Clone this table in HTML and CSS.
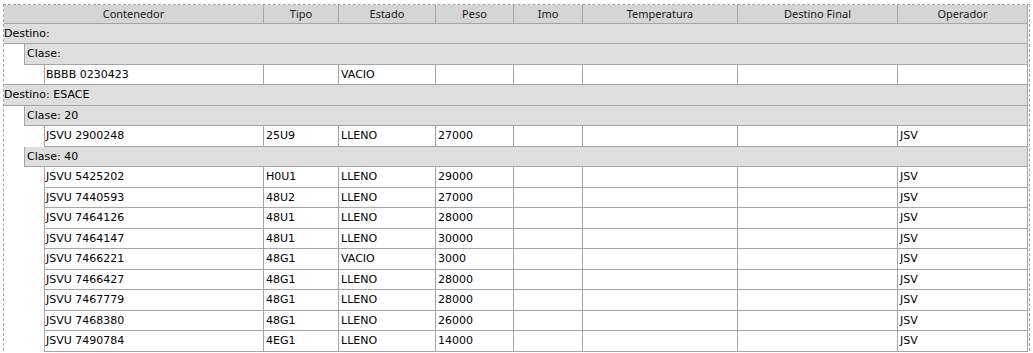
FILE: index.html
```html
<!DOCTYPE html>
<html lang="es">
<head>
<meta charset="utf-8">
<title>Contenedores</title>
<link rel="stylesheet" href="styles.css">
</head>
<body>
<div class="frame">
  <div class="grid">
    <div class="row head">
      <div class="c c1">Contenedor</div>
      <div class="c c2">Tipo</div>
      <div class="c c3">Estado</div>
      <div class="c c4">Peso</div>
      <div class="c c5">Imo</div>
      <div class="c c6">Temperatura</div>
      <div class="c c7">Destino Final</div>
      <div class="c c8">Operador</div>
    </div>

    <div class="row group g0"><div class="gcell">Destino:</div></div>
    <div class="row group g1"><div class="gcell">Clase:</div></div>
    <div class="row data">
      <div class="c c1">BBBB 0230423</div><div class="c c2"></div><div class="c c3">VACIO</div><div class="c c4"></div><div class="c c5"></div><div class="c c6"></div><div class="c c7"></div><div class="c c8"></div>
    </div>

    <div class="row group g0"><div class="gcell">Destino: ESACE</div></div>
    <div class="row group g1"><div class="gcell">Clase: 20</div></div>
    <div class="row data">
      <div class="c c1">JSVU 2900248</div><div class="c c2">25U9</div><div class="c c3">LLENO</div><div class="c c4">27000</div><div class="c c5"></div><div class="c c6"></div><div class="c c7"></div><div class="c c8">JSV</div>
    </div>
    <div class="row group g1"><div class="gcell">Clase: 40</div></div>
    <div class="row data">
      <div class="c c1">JSVU 5425202</div><div class="c c2">H0U1</div><div class="c c3">LLENO</div><div class="c c4">29000</div><div class="c c5"></div><div class="c c6"></div><div class="c c7"></div><div class="c c8">JSV</div>
    </div>
    <div class="row data">
      <div class="c c1">JSVU 7440593</div><div class="c c2">48U2</div><div class="c c3">LLENO</div><div class="c c4">27000</div><div class="c c5"></div><div class="c c6"></div><div class="c c7"></div><div class="c c8">JSV</div>
    </div>
    <div class="row data">
      <div class="c c1">JSVU 7464126</div><div class="c c2">48U1</div><div class="c c3">LLENO</div><div class="c c4">28000</div><div class="c c5"></div><div class="c c6"></div><div class="c c7"></div><div class="c c8">JSV</div>
    </div>
    <div class="row data">
      <div class="c c1">JSVU 7464147</div><div class="c c2">48U1</div><div class="c c3">LLENO</div><div class="c c4">30000</div><div class="c c5"></div><div class="c c6"></div><div class="c c7"></div><div class="c c8">JSV</div>
    </div>
    <div class="row data">
      <div class="c c1">JSVU 7466221</div><div class="c c2">48G1</div><div class="c c3">VACIO</div><div class="c c4">3000</div><div class="c c5"></div><div class="c c6"></div><div class="c c7"></div><div class="c c8">JSV</div>
    </div>
    <div class="row data">
      <div class="c c1">JSVU 7466427</div><div class="c c2">48G1</div><div class="c c3">LLENO</div><div class="c c4">28000</div><div class="c c5"></div><div class="c c6"></div><div class="c c7"></div><div class="c c8">JSV</div>
    </div>
    <div class="row data">
      <div class="c c1">JSVU 7467779</div><div class="c c2">48G1</div><div class="c c3">LLENO</div><div class="c c4">28000</div><div class="c c5"></div><div class="c c6"></div><div class="c c7"></div><div class="c c8">JSV</div>
    </div>
    <div class="row data">
      <div class="c c1">JSVU 7468380</div><div class="c c2">48G1</div><div class="c c3">LLENO</div><div class="c c4">26000</div><div class="c c5"></div><div class="c c6"></div><div class="c c7"></div><div class="c c8">JSV</div>
    </div>
    <div class="row data">
      <div class="c c1">JSVU 7490784</div><div class="c c2">4EG1</div><div class="c c3">LLENO</div><div class="c c4">14000</div><div class="c c5"></div><div class="c c6"></div><div class="c c7"></div><div class="c c8">JSV</div>
    </div>
  </div>
</div>
</body>
</html>
```
FILE: styles.css
```css
html, body {
  margin: 0;
  padding: 0;
  background: #ffffff;
}

body {
  font-family: "DejaVu Sans", Verdana, sans-serif;
  font-size: 11px;
  color: #000000;
}

.frame {
  margin: 4px 0 0 3px;
  width: 1025px;
  height: 360px;
  border: 1px dashed #a3a3a3;
  box-sizing: content-box;
}

.grid {
  width: 1024px;
}

.row {
  display: flex;
  box-sizing: border-box;
  height: 20.53px;
}

.c {
  box-sizing: border-box;
  border-right: 1px solid #a5a5a5;
  border-bottom: 1px solid #a5a5a5;
  padding-left: 2px;
  white-space: nowrap;
  overflow: hidden;
  line-height: 19.53px;
}

.c1 { width: 260px; }
.c2 { width: 75px; }
.c3 { width: 97px; }
.c4 { width: 78px; }
.c5 { width: 69px; }
.c6 { width: 155px; }
.c7 { width: 160px; }
.c8 { width: 130px; }

.head {
  height: 18.5px;
  background: #d5d5d5;
  font-family: "Noto Sans", "Open Sans", sans-serif;
  color: #1a1a1a;
}

.head .c {
  text-align: center;
  padding-left: 0;
  line-height: 17.5px;
}

.group .gcell {
  flex: 1;
  box-sizing: border-box;
  background: #dedede;
  border-right: 1px solid #a5a5a5;
  border-bottom: 1px solid #a5a5a5;
  line-height: 19.53px;
  white-space: nowrap;
}

.g0 {
  height: 21.53px;
  margin-top: -1px;
}

.g0 .gcell {
  border-top: 1px solid #a5a5a5;
  padding-left: 0;
}

.g1 {
  padding-left: 20px;
}

.g1 .gcell {
  border-left: 1px solid #a5a5a5;
  padding-left: 2px;
}

.data {
  padding-left: 40px;
}

.data .c1 {
  width: 220px;
  border-left: 1px solid #a5a5a5;
  padding-left: 1px;
}
```
